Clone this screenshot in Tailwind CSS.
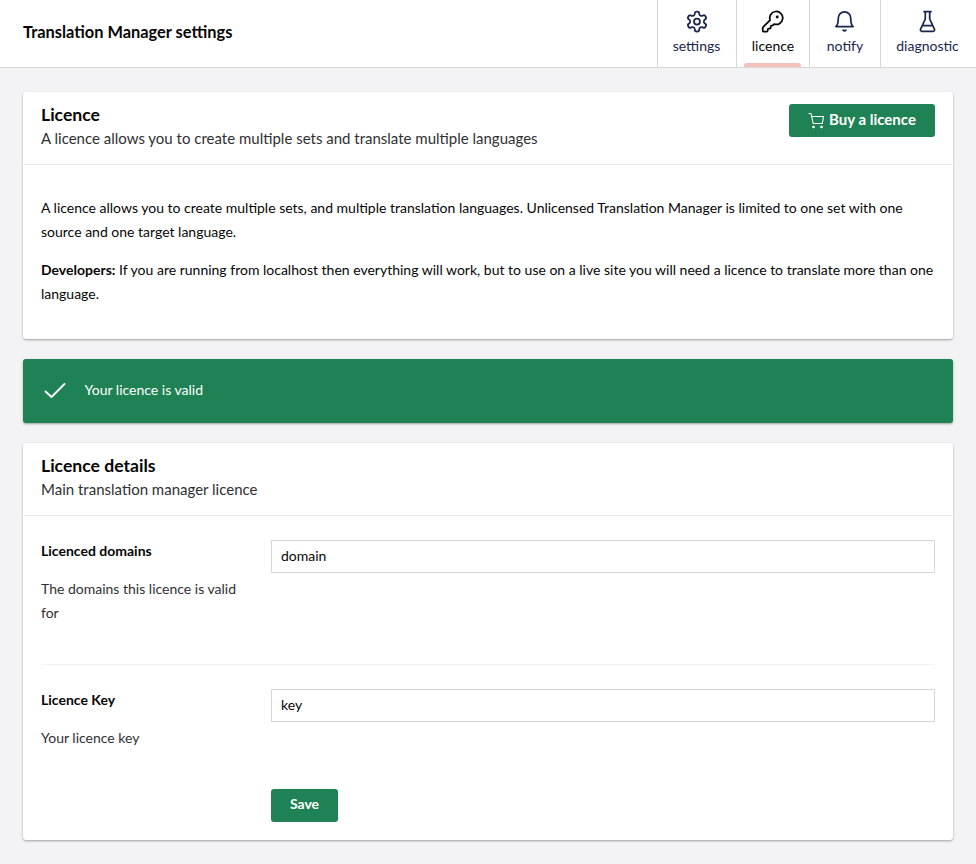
<!DOCTYPE html>
<html lang="en">
<head>
<meta charset="utf-8">
<title>Translation Manager settings</title>
<script src="https://cdn.jsdelivr.net/npm/@tailwindcss/browser@4"></script>
</head>
<body class="h-[864px] overflow-hidden bg-[#f3f3f5] font-['Lato','Carlito',sans-serif] text-[14px] leading-6 text-[#060606]">
<header class="flex h-[68px] items-stretch border-b border-[#d8d7d9] bg-white">
  <h1 class="flex-1 pt-[20px] pl-[23px] text-[16.4px] leading-6 font-bold">Translation Manager settings</h1>
  <nav class="flex text-[#1b264f]">
    <a class="box-content flex w-[77px] flex-col items-center border-l border-[#d8d7d9] pt-[10px] pr-px">
      <svg class="size-6" viewBox="0 0.5 24 24" fill="none" stroke="currentColor" stroke-width="1.75" stroke-linecap="round" stroke-linejoin="round"><path d="M12.22 2h-.44a2 2 0 0 0-2 2v.18a2 2 0 0 1-1 1.73l-.43.25a2 2 0 0 1-2 0l-.15-.08a2 2 0 0 0-2.73.73l-.22.38a2 2 0 0 0 .73 2.73l.15.1a2 2 0 0 1 1 1.72v.51a2 2 0 0 1-1 1.74l-.15.09a2 2 0 0 0-.73 2.73l.22.38a2 2 0 0 0 2.73.73l.15-.08a2 2 0 0 1 2 0l.43.25a2 2 0 0 1 1 1.73V20a2 2 0 0 0 2 2h.44a2 2 0 0 0 2-2v-.18a2 2 0 0 1 1-1.73l.43-.25a2 2 0 0 1 2 0l.15.08a2 2 0 0 0 2.73-.73l.22-.39a2 2 0 0 0-.73-2.73l-.15-.08a2 2 0 0 1-1-1.74v-.5a2 2 0 0 1 1-1.74l.15-.09a2 2 0 0 0 .73-2.73l-.22-.38a2 2 0 0 0-2.73-.73l-.15.08a2 2 0 0 1-2 0l-.43-.25a2 2 0 0 1-1-1.73V4a2 2 0 0 0-2-2z"/><circle cx="12" cy="12" r="3"/></svg>
      <span>settings</span>
    </a>
    <a class="relative box-content flex w-[72px] flex-col items-center border-l border-[#d8d7d9] pt-[10px] text-[#060606]">
      <svg class="size-6" viewBox="0.3 0.5 24 24" fill="none" stroke="currentColor" stroke-width="1.75" stroke-linecap="round" stroke-linejoin="round"><path d="M2.586 17.414A2 2 0 0 0 2 18.828V21a1 1 0 0 0 1 1h3a1 1 0 0 0 1-1v-1a1 1 0 0 1 1-1h1a1 1 0 0 0 1-1v-1a1 1 0 0 1 1-1h.172a2 2 0 0 0 1.414-.586l.814-.814a6.5 6.5 0 1 0-4-4z"/><circle cx="16.5" cy="7.5" r=".6" fill="currentColor"/></svg>
      <span>licence</span>
      <i class="absolute bottom-0 left-[7px] h-1 w-[57px] rounded-t-[3px] bg-[#f5c1bc]"></i>
    </a>
    <a class="box-content flex w-[70px] flex-col items-center border-l border-[#d8d7d9] pt-[10px]">
      <svg class="size-6" viewBox="0.5 0.5 24 24" fill="none" stroke="currentColor" stroke-width="1.75" stroke-linecap="round" stroke-linejoin="round"><path d="M10.6 20.7q1.4 1.1 2.8 0M3.5 17h17M3.5 17c1.8-1.5 2.3-3.2 2.3-8.5a6.2 6.2 0 0 1 12.4 0c0 5.3.5 7 2.3 8.5"/></svg>
      <span>notify</span>
    </a>
    <a class="box-content flex w-[93px] flex-col items-center border-l border-[#d8d7d9] pt-[10px] pr-[2px]">
      <svg class="size-6" viewBox="0.5 0.5 24 24" fill="none" stroke="currentColor" stroke-width="1.75" stroke-linecap="round" stroke-linejoin="round"><path d="M8.5 2h7M9.8 2v7.5L5 19.8A1.5 1.5 0 0 0 6.3 21.8h11.4a1.5 1.5 0 0 0 1.3-2L14.2 9.5V2M7 16h10"/></svg>
      <span>diagnostic</span>
    </a>
  </nav>
</header>
<main class="flex flex-col gap-5 px-[23px] pt-6">
  <section class="h-[247px] rounded-[3px] bg-white shadow-[0_1px_3px_rgba(0,0,0,0.12),0_1px_2px_rgba(0,0,0,0.24)]">
    <div class="flex h-[73px] items-start justify-between border-b border-[#e9e9eb] px-[18px] pt-3">
      <div>
        <h2 class="text-[17.6px] leading-[22px] font-bold">Licence</h2>
        <p class="text-[15px] leading-6 text-[#303033]">A licence allows you to create multiple sets and translate multiple languages</p>
      </div>
      <button class="flex h-[33px] w-[146px] items-center justify-center gap-1 rounded-[3px] bg-[#1f8255] pb-[3px] text-[15px] font-bold text-white">
        <svg class="mt-[3px] size-[17px]" viewBox="0 0 17 17" fill="none" stroke="currentColor" stroke-width="1.1" stroke-linecap="round" stroke-linejoin="round"><path d="M1 1.5h2L5.2 11.5h9.3M3.5 4.5h12L14.3 11.500"/><circle cx="5.5" cy="15" r=".8" fill="currentColor"/><circle cx="13.5" cy="15" r=".8" fill="currentColor"/></svg>
        <span>Buy a licence</span>
      </button>
    </div>
    <div class="flex flex-col gap-[14px] px-[18px] pt-[31px]">
      <p>A licence allows you to create multiple sets, and multiple translation languages. Unlicensed Translation Manager is limited to one set with one<br>source and one target language.</p>
      <p><b>Developers:</b> If you are running from localhost then everything will work, but to use on a live site you will need a licence to translate more than one<br>language.</p>
    </div>
  </section>
  <section class="flex h-16 items-center rounded-[3px] bg-[#1f8255] pb-[2px] pl-5 text-white shadow-[0_1px_3px_rgba(0,0,0,0.12),0_1px_2px_rgba(0,0,0,0.24)]">
    <svg class="size-6" viewBox="0 0 24 24" fill="none" stroke="currentColor" stroke-width="1.9" stroke-linecap="round" stroke-linejoin="round"><path d="M2.5 13.5l6 5.5L21.5 6"/></svg>
    <span class="ml-[17.5px]">Your licence is valid</span>
  </section>
  <section class="h-[397px] rounded-[3px] bg-white shadow-[0_1px_3px_rgba(0,0,0,0.12),0_1px_2px_rgba(0,0,0,0.24)]">
    <div class="h-[73px] border-b border-[#e9e9eb] px-[18px] pt-3">
      <h2 class="text-[17.6px] leading-[22px] font-bold">Licence details</h2>
      <p class="text-[15px] leading-6 text-[#303033]">Main translation manager licence</p>
    </div>
    <div class="px-[18px]">
      <div class="flex h-[149px] border-b border-[#f3f3f5] pt-6">
        <div class="-mt-px w-[230px]">
          <p class="font-bold">Licenced domains</p>
          <p class="mt-[14px] text-[#303033]">The domains this licence is valid<br>for</p>
        </div>
        <div class="flex h-[33px] flex-1 items-center border border-[#d8d7d9] px-[9px] pb-[2px]">domain</div>
      </div>
      <div class="flex pt-6">
        <div class="-mt-px w-[230px]">
          <p class="font-bold">Licence Key</p>
          <p class="mt-[14px] text-[#303033]">Your licence key</p>
        </div>
        <div class="flex-1">
          <div class="flex h-[33px] items-center border border-[#d8d7d9] px-[9px] pb-[2px]">key</div>
          <button class="mt-[67px] block h-[33px] w-[67px] rounded-[3px] bg-[#1f8255] pb-[3px] font-bold text-white">Save</button>
        </div>
      </div>
    </div>
  </section>
</main>
</body>
</html>
